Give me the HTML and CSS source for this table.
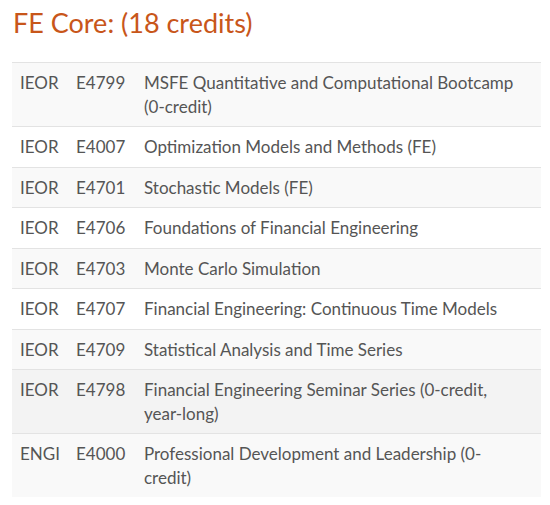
FILE: index.html
```html
<!DOCTYPE html>
<html>
<head>
<meta charset="utf-8">
<link rel="stylesheet" href="styles.css">
</head>
<body>
<h2 class="title">FE Core: (18 credits)</h2>
<table class="courses">
<colgroup><col class="c-dept"><col class="c-num"><col class="c-name"></colgroup>
<tbody>
<tr><td>IEOR</td><td>E4799</td><td class="name">MSFE Quantitative and Computational Bootcamp (0-credit)</td></tr>
<tr><td>IEOR</td><td>E4007</td><td class="name">Optimization Models and Methods (FE)</td></tr>
<tr><td>IEOR</td><td>E4701</td><td class="name">Stochastic Models (FE)</td></tr>
<tr><td>IEOR</td><td>E4706</td><td class="name">Foundations of Financial Engineering</td></tr>
<tr><td>IEOR</td><td>E4703</td><td class="name">Monte Carlo Simulation</td></tr>
<tr><td>IEOR</td><td>E4707</td><td class="name">Financial Engineering: Continuous Time Models</td></tr>
<tr><td>IEOR</td><td>E4709</td><td class="name">Statistical Analysis and Time Series</td></tr>
<tr class="hover"><td>IEOR</td><td>E4798</td><td class="name">Financial Engineering Seminar Series (0-credit, year-long)</td></tr>
<tr><td>ENGI</td><td>E4000</td><td class="name">Professional Development and Leadership (0-credit)</td></tr>
</tbody>
</table>
</body>
</html>
```
FILE: styles.css
```css
html, body { margin: 0; padding: 0; background: #fff; }
body {
  padding: 0 9px 0 12px;
  font-family: Lato, "Open Sans", sans-serif;
  color: #555;
}
.title {
  margin: 0;
  padding-top: 7px;
  height: 62px;
  box-sizing: border-box;
  font-weight: 400;
  font-size: 27px;
  line-height: 32px;
  color: #c8561a;
  padding-left: 1px;
}
.courses {
  width: 529px;
  border-collapse: collapse;
  font-size: 17px;
  line-height: 23.5px;
}
.c-dept { width: 54px; }
.c-num { width: 68px; }
.courses td {
  padding: 8px;
  border-top: 1px solid #e3e3e3;
  vertical-align: top;
}
.courses td.name { padding-right: 16px; }
.courses tr:nth-child(odd) { background: #f9f9f9; }
.courses tr.hover { background: #f3f3f3; }
```
